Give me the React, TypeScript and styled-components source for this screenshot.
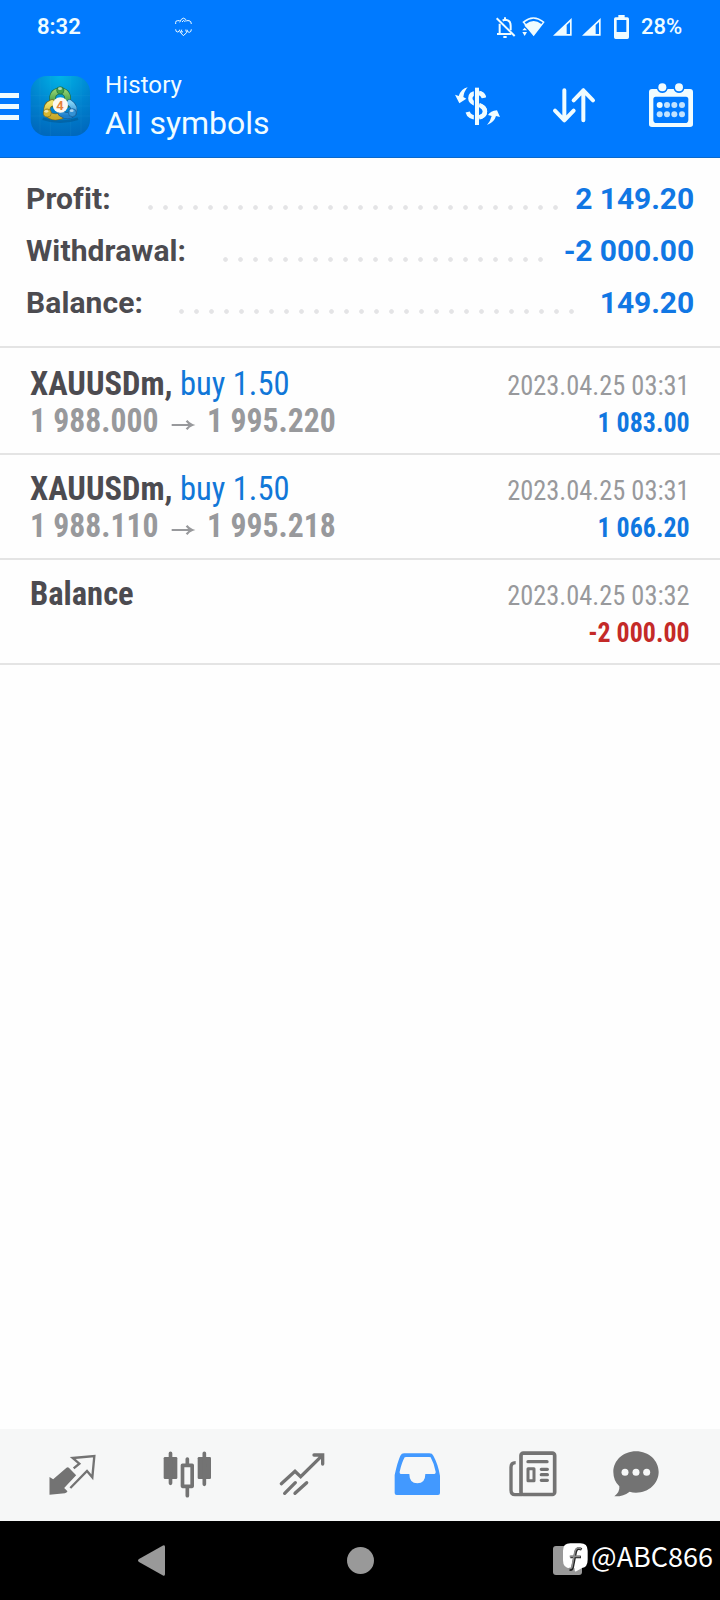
import React from "react";
import styled, { createGlobalStyle } from "styled-components";

const Global = createGlobalStyle`
  * { box-sizing: border-box; }
  body { margin: 0; background: #fff; font-family: Roboto, "Liberation Sans", sans-serif; }
  svg { display: block; flex: none; overflow: visible; }
`;

const Screen = styled.div`
  width: 720px;
  height: 1600px;
  display: flex;
  flex-direction: column;
  background: #fefefe;
  overflow: hidden;
`;

const TopArea = styled.header`
  height: 158px;
  background: #007aff;
  color: #f0fcff;
  border-bottom: 1px solid #0b69cb;
`;

const StatusBar = styled.div`
  height: 54px;
  padding: 0 38px 0 37px;
  display: flex;
  align-items: center;
  font-size: 22px;
  font-weight: 600;
  line-height: 54px;
`;

const Clock = styled.span`
  width: 138px;
`;

const StatusIcons = styled.div`
  margin-left: auto;
  margin-right: 12px;
  display: flex;
  align-items: center;
`;

const StatusSlot = styled.span<{ $gap: number }>`
  margin-right: ${(p) => p.$gap}px;
`;

const BatteryLevel = styled.span`
  width: 41px;
  font-weight: 500;
`;

const AppBar = styled.div`
  height: 103px;
  padding-right: 27px;
  display: flex;
  align-items: center;
`;

const MenuBars = styled.div`
  width: 19px;
  margin: 2px 11px 0 0;
  display: flex;
  flex-direction: column;
  gap: 6px;
`;

const MenuBar = styled.span`
  height: 5px;
  background: #f0fcff;
`;

const Titles = styled.div`
  margin: 0 0 2px 15px;
  flex: 1;
`;

const Caption = styled.div`
  font-size: 24px;
  line-height: 36px;
  letter-spacing: 0.1px;
`;

const Title = styled.div`
  font-size: 32px;
  line-height: 40px;
`;

const Actions = styled.div`
  display: flex;
  align-items: center;
  gap: 54px;

  > :first-child { margin-right: -1px; }
`;

const Summary = styled.section`
  padding: 15px 26px 17px;
  border-bottom: 2px solid #e4e4e4;
`;

const SummaryRow = styled.div`
  display: flex;
  align-items: center;
  height: 52px;
  font-size: 30px;
  line-height: 52px;
  font-weight: 700;
  color: #4c4b50;
`;

const SummaryLabel = styled.span`
  letter-spacing: 0.1px;
`;

const Leader = styled.span<{ $count: number }>`
  width: ${(p) => p.$count * 15}px;
  height: 15px;
  margin-left: auto;
  margin-top: 17px;
  background: radial-gradient(circle at center, #e4e4e6 1.9px, transparent 2.8px) 0 0 / 15px 15px;
`;

const SummaryValue = styled.span<{ $width: number }>`
  width: ${(p) => p.$width}px;
  letter-spacing: -0.1px;
  color: #1177e4;
  text-align: right;
`;

const DealList = styled.main`
  flex: 1;
  padding-top: 2px;
`;

const DealRow = styled.article`
  height: 105px;
  padding: 15px 30px 14px;
  display: flex;
  justify-content: space-between;
  border-bottom: 2px solid #e4e4e4;
  font-family: "Roboto Condensed", Roboto, sans-serif;
  font-stretch: 75%;
`;

const DealInfo = styled.div`
  font-size: 34px;
  line-height: 37px;
  white-space: pre;
`;

const DealTitle = styled.div`
  transform: scaleX(0.957);
  transform-origin: left;
`;

const Symbol = styled.span`
  font-weight: 700;
  color: #4c4b50;
`;

const Side = styled.span`
  color: #1177d8;
`;

const Prices = styled.div`
  font-weight: 700;
  color: #98999c;
  display: flex;
  align-items: center;
  transform: scaleX(0.932);
  transform-origin: left;
`;

const ArrowSlot = styled.span`
  padding: 9px 14px 0 14px;
`;

const DealResult = styled.div`
  padding-top: 2px;
  font-size: 28px;
  line-height: 37px;
  text-align: right;
`;

const When = styled.div`
  color: #98999c;
  transform: scaleX(0.942);
  transform-origin: right;
`;

const Amount = styled.div<{ $loss?: boolean }>`
  font-weight: 700;
  color: ${(p) => (p.$loss ? "#c42a28" : "#1177e0")};
  transform: scaleX(0.925);
  transform-origin: right;
`;

const TabBar = styled.nav`
  height: 92px;
  padding-left: 14px;
  display: grid;
  grid-template-columns: repeat(5, 115px) 94px;
  align-items: center;
  justify-items: center;
  background: #f6f7f7;
  color: #737373;
`;

const SystemBar = styled.footer`
  position: relative;
  height: 79px;
  padding: 0 138px;
  display: flex;
  align-items: center;
  justify-content: space-between;
  background: #000;
  color: #999;
`;

const Watermark = styled.div`
  position: absolute;
  right: 7px;
  top: 17px;
  display: flex;
  align-items: center;
  gap: 3px;
  height: 36px;
  color: #fff;
  font-family: "Noto Sans CJK SC", sans-serif;
  font-size: 27px;
  line-height: 36px;
`;

const Badge = styled.svg`
  margin-top: 3px;
`;

function CloudIcon() {
  return (
    <svg width="17" height="20" viewBox="0 0 51 60" fill="none" stroke="currentColor" strokeWidth="3">
      <path d="M2 21v-5q0-5 6-5h6M14 16l5-9q6-7 13 0l2 6M21 15l5-5 5 5M36 11h6q7 1 7 10M2 37q0 8 6 8 6-1 6-7M14 45h6M20 38l-3 9 8 9 10-9-3-9M36 38q0 8 7 8 6-1 6-9M20 42l4 4" />
    </svg>
  );
}

function BellOffIcon() {
  return (
    <svg width="20" height="21" viewBox="0 0 60 63" fill="none" stroke="currentColor" strokeWidth="6">
      <path d="M2 4l54 53" />
      <path d="M11 20v28M3 51h43M20 11q4-3 9-3 15 2 15 18v14" />
      <path d="M27 1v8M22 60h10" />
    </svg>
  );
}

function WifiIcon() {
  return (
    <svg width="23" height="20" viewBox="0 0 69 60" fill="currentColor">
      <path d="M1 15Q34-14 68 15L35 58 19 38 9 28 7 22zM8 16l4 5q23-18 46 0l4-5Q34-5 8 16z" fillRule="evenodd" />
      <path d="M1 40l7-8 7 8zM1 45h14l-7 12z" />
    </svg>
  );
}

function SignalIcon() {
  return (
    <svg width="19" height="18" viewBox="0 0 57 54">
      <path d="M0 53L56 0v53zM41 21v27h10V12z" fill="currentColor" fillRule="evenodd" />
    </svg>
  );
}

function BatteryIcon() {
  return (
    <svg width="15" height="24" viewBox="0 0 45 72" fill="currentColor">
      <path d="M13 0h19v7h8q5 0 5 5v55q0 5-5 5H5q-5 0-5-5V12q0-5 5-5h8zM8 15v36h29V15z" fillRule="evenodd" />
    </svg>
  );
}

function AppLogo() {
  return (
    <svg width="60" height="60" viewBox="-2 0 180 180">
      <defs>
        <radialGradient id="tile" cx="0.5" cy="0" r="1">
          <stop offset="0" stopColor="#00b4e6" />
          <stop offset="0.55" stopColor="#0083cf" />
          <stop offset="1" stopColor="#0069bd" />
        </radialGradient>
        <linearGradient id="green" x1="0" y1="0" x2="0" y2="1">
          <stop offset="0" stopColor="#8fd06e" />
          <stop offset="1" stopColor="#2f9140" />
        </linearGradient>
        <linearGradient id="yellow" x1="0" y1="0" x2="0" y2="1">
          <stop offset="0" stopColor="#f0e26a" />
          <stop offset="1" stopColor="#c8a929" />
        </linearGradient>
        <linearGradient id="blue" x1="0" y1="0" x2="0" y2="1">
          <stop offset="0" stopColor="#7fd0f5" />
          <stop offset="1" stopColor="#1d7fcb" />
        </linearGradient>
      </defs>
      <rect width="178" height="180" rx="48" fill="url(#tile)" />
      <path d="M0 59h178M0 90h178M0 120h178M28 8v164M59 0v180M120 0v180M151 8v164" stroke="#49bce8" strokeOpacity="0.14" strokeWidth="2" />
      <path d="M36 128q52 18 106 0" stroke="#034f86" strokeOpacity="0.45" strokeWidth="8" fill="none" />
      <g fill="none" strokeLinecap="round">
        <path d="M68 84Q58 48 88 44q32 4 20 42" stroke="#1f6b43" strokeWidth="20" />
        <path d="M68 84Q58 48 88 44q32 4 20 42" stroke="url(#green)" strokeWidth="16" />
        <path d="M64 80q-19 7-15 30 14 19 42 10" stroke="#786b22" strokeWidth="20" />
        <path d="M64 80q-19 7-15 30 14 19 42 10" stroke="url(#yellow)" strokeWidth="16" />
        <path d="M117 80q18 12 11 32-16 15-36 0" stroke="#165a92" strokeWidth="20" />
        <path d="M117 80q18 12 11 32-16 15-36 0" stroke="url(#blue)" strokeWidth="16" />
      </g>
      <g strokeWidth="2">
        <circle cx="89" cy="43" r="11" fill="#41a24b" stroke="#1f6b43" />
        <circle cx="50" cy="111" r="12" fill="#d8b62f" stroke="#786b22" />
        <circle cx="125" cy="110" r="12" fill="#3391d4" stroke="#165a92" />
      </g>
      <g fill="#fff" fillOpacity="0.6">
        <ellipse cx="88" cy="38" rx="6" ry="4" />
        <ellipse cx="47" cy="106" rx="6" ry="4" />
        <ellipse cx="123" cy="104" rx="6" ry="4" />
      </g>
      <circle cx="89" cy="87" r="23" fill="#fbf8f1" />
      <text x="88" y="101" fill="#e5813a" fontFamily="Roboto, sans-serif" fontSize="39" fontWeight="700" textAnchor="middle">4</text>
    </svg>
  );
}

function DollarIcon() {
  return (
    <svg width="46" height="40" viewBox="0 0 138 120" fill="none" stroke="currentColor">
      <path d="M90 35Q86 21 68 21 49 22 49 37q0 12 18 18 25 6 26 21 0 17-23 19-25-1-29-17" strokeWidth="13" />
      <path d="M69 5v112" stroke="#007aff" strokeWidth="19" />
      <path d="M69 5v112" strokeWidth="12" />
      <path d="M75 21q12 2 15 14M75 57q18 6 18 19 0 14-18 18" strokeWidth="13" />
      <path d="M41 4q-19 4-27 26L3 26l13 26 21-14-9-5q2-17 13-29zM99 117q22-8 27-27l12 3-9-20q-20 2-27 14l11 3q-3 14-14 27z" fill="currentColor" stroke="none" />
    </svg>
  );
}

function SortIcon() {
  return (
    <svg width="42" height="35" viewBox="0 0 126 105" fill="none" stroke="currentColor" strokeWidth="12" strokeLinecap="round" strokeLinejoin="round">
      <path d="M34 7v90M6 68l28 29 28-29M91 97V7M62 37L91 7l29 30" />
    </svg>
  );
}

function CalendarIcon() {
  return (
    <svg width="44" height="44" viewBox="0 2 132 132" fill="currentColor">
      <path d="M9 17h15q4 12 16 12t16-12h18q4 12 16 12t16-12h17q9 0 9 9v97q0 8-9 8H9q-9 0-9-8V26q0-9 9-9zM20 40q-7 0-7 8v61q0 10 10 10h85q10 0 10-10V48q0-8-7-8z" fillRule="evenodd" />
      <circle cx="40" cy="12" r="12" />
      <circle cx="90" cy="12" r="12" />
      {[32, 54, 76, 99].map((x) =>
        [65, 93].map((y) => <circle key={`${x}-${y}`} cx={x} cy={y} r="9" opacity={x === 32 && y === 65 ? 1 : 0.8} />)
      )}
    </svg>
  );
}

function PriceArrow() {
  return (
    <svg width="24" height="12" viewBox="0 0 72 36" fill="none" stroke="currentColor" strokeWidth="6">
      <path d="M0 18h64" />
      <path d="M48 5q7 9 18 13-11 4-18 13" strokeWidth="7" />
    </svg>
  );
}

const TabSvg = ({ children }: { children: React.ReactNode }) => (
  <svg width="48" height="48" viewBox="0 0 144 144" fill="none" stroke="currentColor">
    {children}
  </svg>
);

function QuotesIcon() {
  return (
    <TabSvg>
      <path d="M4.500 78l11 7 40-35q4-3 7 0l22 23-36 38 10 10q-2 5-8 6l-46 4z" fill="currentColor" stroke="none" />
      <path d="M77 52l17-14-20-17 65-6-6 64-16-19-50 51" strokeWidth="7" />
    </TabSvg>
  );
}

function CandlesIcon() {
  return (
    <TabSvg>
      <rect x="2" y="18" width="41" height="66" rx="4" fill="currentColor" stroke="none" />
      <rect x="104" y="18" width="40" height="66" rx="4" fill="currentColor" stroke="none" />
      <rect x="58.500" y="43" width="29" height="63" strokeWidth="11" strokeLinejoin="round" />
      <path d="M22.500 7v90M124 7v93M73 24v16M73 109v25" strokeWidth="11" strokeLinecap="round" />
    </TabSvg>
  );
}

function TrendIcon() {
  return (
    <TabSvg>
      <path d="M10 98l41-37 17 16 65-64M108 12h26v27M20 127l32-32M51 127l35-32" strokeWidth="10" strokeLinecap="round" />
    </TabSvg>
  );
}

function HistoryIcon() {
  return (
    <TabSvg>
      <path
        d="M5 72Q13 34 22 14q4-7 11-7h76q9 0 12 7 14 25 20 60v52q0 6-6 6H11q-6 0-6-6zM35 19Q26 35 20 62q-1 7 6 7h23q0 28 24 28t24-28h24q8 0 7-7-5-25-15-43-2-1-5-1H40q-3 0-5 1z"
        fill="#4299ff"
        fillRule="evenodd"
        stroke="none"
      />
    </TabSvg>
  );
}

function NewsIcon() {
  return (
    <TabSvg>
      <rect x="39" y="6.500" width="101" height="124" rx="7" strokeWidth="11" />
      <path d="M23 35q-14 0-14 14v68q0 14 12 14h22" strokeWidth="10" />
      <path d="M60 32h57M100 55h18M100 71h18M100 88h18" strokeWidth="10" strokeLinecap="round" />
      <rect x="60" y="53" width="18" height="36" strokeWidth="9" strokeLinejoin="round" />
    </TabSvg>
  );
}

function ChatIcon() {
  return (
    <TabSvg>
      <path d="M72 1c39 0 68 28 68 62s-29 62-68 62q-10 0-19-3-19 15-46 14 17-13 15-30Q4 89 4 63C4 29 33 1 72 1z" fill="currentColor" stroke="none" />
      {[39, 72, 104].map((x) => (
        <circle key={x} cx={x} cy="64" r="10.500" fill="#f6f7f7" stroke="none" />
      ))}
    </TabSvg>
  );
}

const summary = [
  { label: "Profit:", value: "2 149.20", count: 28, width: 131 },
  { label: "Withdrawal:", value: "-2 000.00", count: 22, width: 146 },
  { label: "Balance:", value: "149.20", count: 27, width: 115 },
];

const deals = [
  { symbol: "XAUUSDm,", side: " buy 1.50", from: "1 988.000", to: "1 995.220", when: "2023.04.25 03:31", amount: "1 083.00" },
  { symbol: "XAUUSDm,", side: " buy 1.50", from: "1 988.110", to: "1 995.218", when: "2023.04.25 03:31", amount: "1 066.20" },
  { symbol: "Balance", when: "2023.04.25 03:32", amount: "-2 000.00", loss: true },
];

export default function App() {
  return (
    <Screen>
      <Global />
      <TopArea>
        <StatusBar>
          <Clock>8:32</Clock>
          <CloudIcon />
          <StatusIcons>
            <StatusSlot $gap={6}><BellOffIcon /></StatusSlot>
            <StatusSlot $gap={8}><WifiIcon /></StatusSlot>
            <StatusSlot $gap={10}><SignalIcon /></StatusSlot>
            <StatusSlot $gap={13}><SignalIcon /></StatusSlot>
            <BatteryIcon />
          </StatusIcons>
          <BatteryLevel>28%</BatteryLevel>
        </StatusBar>
        <AppBar>
          <MenuBars><MenuBar /><MenuBar /><MenuBar /></MenuBars>
          <AppLogo />
          <Titles>
            <Caption>History</Caption>
            <Title>All symbols</Title>
          </Titles>
          <Actions><DollarIcon /><SortIcon /><CalendarIcon /></Actions>
        </AppBar>
      </TopArea>
      <Summary>
        {summary.map((s) => (
          <SummaryRow key={s.label}>
            <SummaryLabel>{s.label}</SummaryLabel>
            <Leader $count={s.count} />
            <SummaryValue $width={s.width}>{s.value}</SummaryValue>
          </SummaryRow>
        ))}
      </Summary>
      <DealList>
        {deals.map((d) => (
          <DealRow key={d.amount}>
            <DealInfo>
              <DealTitle>
                <Symbol>{d.symbol}</Symbol>
                <Side>{d.side}</Side>
              </DealTitle>
              {d.from && (
                <Prices>
                  {d.from}
                  <ArrowSlot><PriceArrow /></ArrowSlot>
                  {d.to}
                </Prices>
              )}
            </DealInfo>
            <DealResult>
              <When>{d.when}</When>
              <Amount $loss={d.loss}>{d.amount}</Amount>
            </DealResult>
          </DealRow>
        ))}
      </DealList>
      <TabBar>
        <QuotesIcon />
        <CandlesIcon />
        <TrendIcon />
        <HistoryIcon />
        <NewsIcon />
        <ChatIcon />
      </TabBar>
      <SystemBar>
        <svg width="27" height="31" viewBox="0 0 27 31" fill="currentColor">
          <path d="M25 .5q2-1 2 1.500v27q0 2.500-2 1.500L1 17q-2-1.500 0-3z" />
        </svg>
        <svg width="27" height="27" viewBox="-1 0 27 27" fill="currentColor">
          <circle cx="13.500" cy="13.500" r="13.500" />
        </svg>
        <svg width="29" height="29" viewBox="0 0 29 29" fill="currentColor">
          <rect width="29" height="29" rx="3" />
        </svg>
        <Watermark>
          <Badge width="26" height="29" viewBox="-1 0 78 87">
            <path d="M24 1h30q22 0 22 22v27q0 22-17 25l-17 10q-5 2-5-4v-5H24Q2 76 2 52V23Q2 1 24 1z" fill="#fff" />
            <path d="M58 19q-14-7-18 8l-9 46q-2 9-9 6M24 42h32" fill="none" stroke="#222" strokeWidth="8" />
            <path d="M56 17q-14-7-18 8l-9 46q-2 7-9 5M22 40h32" fill="none" stroke="#8c8c8c" strokeWidth="5" />
          </Badge>
          @ABC866
        </Watermark>
      </SystemBar>
    </Screen>
  );
}
